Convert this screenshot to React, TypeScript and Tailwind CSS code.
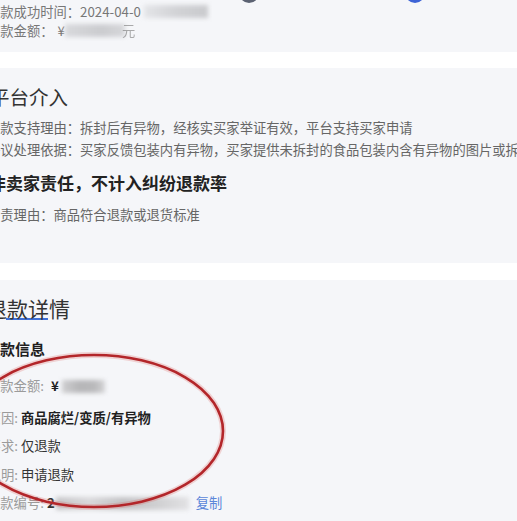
const rowLabel = "text-[#9b9b9b]";

function Smudge({ className }: { className: string }) {
  return <span className={"inline-block blur-[2px] " + className} />;
}

export default function App() {
  return (
    <div className="relative h-[521px] w-[517px] overflow-hidden bg-white font-['Noto_Sans_CJK_SC','Noto_Sans',sans-serif]">
      {/* progress card */}
      <div className="h-[52px] bg-[#f5f6f9]">
        <div className="flex h-0">
          <div className="-mt-[17px] ml-[239px] h-[20px] w-[20px] rounded-full bg-[#5b6272]" />
          <div className="-mt-[17px] ml-[146px] h-[20px] w-[20px] rounded-full bg-[#3d63d6]" />
        </div>
        <div className="-ml-[13px] whitespace-nowrap pt-[1.5px] text-[13.3px] leading-[19px] text-[#777]">
          <div className="flex items-center">
            退款成功时间：2024-04-0
            <Smudge className="ml-[3px] h-[13px] w-[64px] bg-[linear-gradient(90deg,#e4e5e8,#d2d3d6_50%,#c9cacd)]" />
          </div>
          <div className="flex items-center">
            退款金额：<span className="ml-[4px]">¥</span>
            <Smudge className="h-[13px] w-[60px] bg-[linear-gradient(90deg,#d8d9dc,#cbcccf_60%,#d6d7da)]" />
            <span className="-ml-[3px] opacity-60">元</span>
          </div>
        </div>
      </div>

      {/* 平台介入 */}
      <div className="mt-[16px] h-[195px] bg-[#f5f6f9]">
        <div className="-ml-[13px] whitespace-nowrap pt-[15px]">
          <div className="ml-[3px] text-[19.5px] leading-[28px] text-[#333]">平台介入</div>
          <div className="mt-[6px] text-[13.3px] leading-[22px] text-[#666]">
            退款支持理由：拆封后有异物，经核实买家举证有效，平台支持买家申请
          </div>
          <div className="text-[13.3px] leading-[22px] text-[#666]">
            争议处理依据：买家反馈包装内有异物，买家提供未拆封的食品包装内含有异物的图片或拆封视频
          </div>
          <div className="ml-[2px] mt-[10px] text-[17px] font-bold leading-[24px] text-[#222]">
            非卖家责任，不计入纠纷退款率
          </div>
          <div className="mt-[9px] text-[13.3px] leading-[22px] text-[#666]">定责理由：商品符合退款或退货标准</div>
        </div>
      </div>

      {/* 退款详情 */}
      <div className="mt-[17px] h-[241px] bg-[#f5f6f9]">
        <div className="-ml-[13px] whitespace-nowrap pt-[14px]">
          <div className="-ml-[1px] text-[21px] leading-[28px] text-[#333]">退款详情</div>
          <div className="-mt-[4px] ml-[19px] h-[2px] w-[42px] bg-[#3e6fd6]" />
          <div className="-ml-[2px] mt-[18px] text-[15px] font-bold leading-[22px] text-[#1f1f1f]">退款信息</div>

          <div className="mt-[15px] flex items-center text-[13.3px] leading-[22px]">
            <span className={rowLabel}>退款金额:</span>
            <span className="ml-[7px] font-bold text-[#1f1f1f]">¥</span>
            <Smudge className="ml-[3px] h-[13px] w-[43px] bg-[linear-gradient(90deg,#cfcfd1,#b6b6b8_40%,#b9b9bb_75%,#d4d4d6)]" />
          </div>
          <div className="-ml-[26px] mt-[10px] flex items-center text-[13.3px] leading-[22px]">
            <span className={rowLabel}>退款原因:</span>
            <span className="ml-[3px] font-bold text-[#1f1f1f]">商品腐烂/变质/有异物</span>
          </div>
          <div className="-ml-[26px] mt-[6px] flex items-center text-[13.3px] leading-[22px]">
            <span className={rowLabel}>退款要求:</span>
            <span className="ml-[3px] text-[#333]">仅退款</span>
          </div>
          <div className="-ml-[26px] mt-[7px] flex items-center text-[13.3px] leading-[22px]">
            <span className={rowLabel}>退款说明:</span>
            <span className="ml-[3px] text-[#333]">申请退款</span>
          </div>
          <div className="mt-[6px] flex items-center text-[13.3px] leading-[22px]">
            <span className={rowLabel}>退款编号:</span>
            <span className="ml-[3px] font-bold text-[#333]">2</span>
            <Smudge className="ml-[1px] h-[13px] w-[133px] bg-[linear-gradient(90deg,#c6c6c8,#d9d9db_25%,#c3c3c5_50%,#cfcfd1_75%,#e2e2e4)]" />
            <span className="ml-[7px] text-[#5b86d9]">复制</span>
          </div>
        </div>
      </div>

      {/* red marker ring */}
      <svg className="pointer-events-none absolute left-0 top-0" width="517" height="521">
        <ellipse cx="94" cy="431" rx="129" ry="76" fill="none" stroke="#d9534f" strokeOpacity="0.22" strokeWidth="6" />
        <ellipse cx="94" cy="431" rx="129" ry="76" fill="none" stroke="#b3262a" strokeWidth="2.6" />
      </svg>
    </div>
  );
}
